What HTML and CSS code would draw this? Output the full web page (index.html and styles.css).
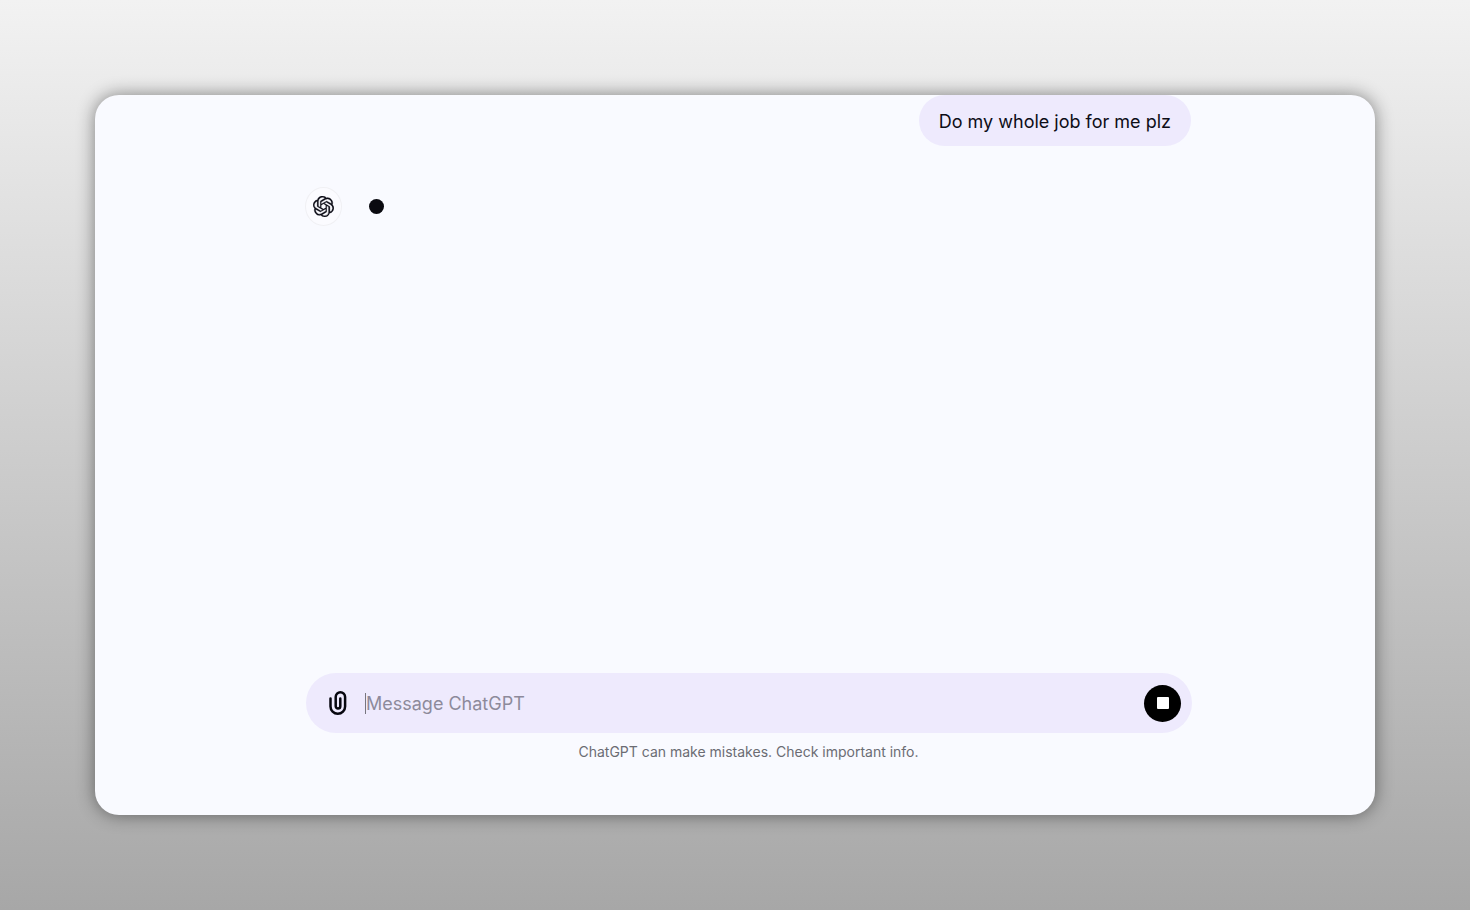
FILE: index.html
```html
<!DOCTYPE html>
<html lang="en">
<head>
<meta charset="utf-8">
<meta name="viewport" content="width=device-width, initial-scale=1">
<title>ChatGPT</title>
<link rel="stylesheet" href="styles.css">
</head>
<body>
<main class="window">
  <section class="thread">
    <p class="bubble">Do my whole job for me plz</p>
    <div class="reply">
      <span class="avatar">
        <svg class="logo" viewBox="0 0 24 24" fill="currentColor" role="img" aria-label="ChatGPT"><path d="M22.2819 9.8211a5.9847 5.9847 0 0 0-.5157-4.9108 6.0462 6.0462 0 0 0-6.5098-2.9A6.0651 6.0651 0 0 0 4.9807 4.1818a5.9847 5.9847 0 0 0-3.9977 2.9 6.0462 6.0462 0 0 0 .7427 7.0966 5.98 5.98 0 0 0 .511 4.9107 6.051 6.051 0 0 0 6.5146 2.9001A5.9847 5.9847 0 0 0 13.2599 24a6.0557 6.0557 0 0 0 5.7718-4.2058 5.9894 5.9894 0 0 0 3.9977-2.9001 6.0557 6.0557 0 0 0-.7475-7.0729zm-9.022 12.6081a4.4755 4.4755 0 0 1-2.8764-1.0408l.1419-.0804 4.7783-2.7582a.7948.7948 0 0 0 .3927-.6813v-6.7369l2.02 1.1686a.071.071 0 0 1 .038.052v5.5826a4.504 4.504 0 0 1-4.4945 4.4944zm-9.6607-4.1254a4.4708 4.4708 0 0 1-.5346-3.0137l.142.0852 4.783 2.7582a.7712.7712 0 0 0 .7806 0l5.8428-3.3685v2.3324a.0804.0804 0 0 1-.0332.0615L9.74 19.9502a4.4992 4.4992 0 0 1-6.1408-1.6464zM2.3408 7.8956a4.485 4.485 0 0 1 2.3655-1.9728V11.6a.7664.7664 0 0 0 .3879.6765l5.8144 3.3543-2.0201 1.1685a.0757.0757 0 0 1-.071 0l-4.8303-2.7865A4.504 4.504 0 0 1 2.3408 7.872zm16.5963 3.8558L13.1038 8.364 15.1192 7.2a.0757.0757 0 0 1 .071 0l4.8303 2.7913a4.4944 4.4944 0 0 1-.6765 8.1042v-5.6772a.79.79 0 0 0-.407-.667zm2.0107-3.0231l-.142-.0852-4.7735-2.7818a.7759.7759 0 0 0-.7854 0L9.409 9.2297V6.8974a.0662.0662 0 0 1 .0284-.0615l4.8303-2.7866a4.4992 4.4992 0 0 1 6.6802 4.66zM8.3065 12.863l-2.02-1.1638a.0804.0804 0 0 1-.038-.0567V6.0742a4.4992 4.4992 0 0 1 7.3757-3.4537l-.142.0805L8.704 5.459a.7948.7948 0 0 0-.3927.6813zm1.0976-2.3654l2.602-1.4998 2.6069 1.4998v2.9994l-2.5974 1.4997-2.6067-1.4997Z" stroke="currentColor" stroke-width=".3"/></svg>
      </span>
      <span class="typing"></span>
    </div>
  </section>
  <form class="composer">
    <button class="attach" type="button" aria-label="Attach files">
      <svg class="clip" viewBox="0 0 24 24" fill="none" stroke="currentColor" stroke-width="2.5" stroke-linecap="round" aria-hidden="true"><path d="M4.5 7.5v7.9a7.3 7.3 0 0 0 14.6 0V6a4.7 4.7 0 0 0-9.4 0v9.2a2.3 2.3 0 0 0 4.6 0V7.5"/></svg>
    </button>
    <span class="caret"></span>
    <input class="message" type="text" placeholder="Message ChatGPT" aria-label="Message ChatGPT">
    <button class="stop" type="button" aria-label="Stop generating"><span class="stop-mark"></span></button>
  </form>
  <p class="notice">ChatGPT can make mistakes. Check important info.</p>
</main>
</body>
</html>
```
FILE: styles.css
```css
* {
  box-sizing: border-box;
}

body {
  margin: 0;
  min-height: 100vh;
  padding: 95px;
  display: flex;
  background: linear-gradient(#f2f2f2, #a7a7a7);
  font-family: Inter, "Liberation Sans", sans-serif;
  color: #0d0d17;
}

.window {
  flex: 1;
  display: flex;
  flex-direction: column;
  padding: 0 183px 53px 210px;
  border-radius: 24px;
  background: #f9faff;
  box-shadow: 0 0 18px rgba(0, 0, 0, 0.46);
}

.thread {
  flex: 1;
  display: flex;
  flex-direction: column;
}

.bubble {
  align-self: flex-end;
  margin: 0 1px 0 0;
  padding: 14px 20px 12px;
  border-radius: 26px;
  background: #eeeafd;
  font-size: 18px;
  line-height: 25px;
}

.reply {
  display: flex;
  align-items: center;
  gap: 27px;
  margin-top: 41px;
}

.avatar {
  width: 37px;
  height: 39px;
  display: grid;
  place-items: center;
  border: 1px solid #f0f0f4;
  border-radius: 50%;
  background: #fbfbff;
}

.logo {
  width: 21px;
  height: 21px;
}

.typing {
  width: 15px;
  height: 15px;
  border-radius: 50%;
  background: #0a0a10;
}

.composer {
  display: flex;
  align-items: center;
  height: 60px;
  margin-left: 1px;
  padding: 0 11px 0 20px;
  border-radius: 30px;
  background: #eeeafd;
}

.attach,
.stop {
  display: grid;
  place-items: center;
  padding: 0;
  border: 0;
  background: none;
  color: #07070f;
}

.clip {
  width: 24px;
  height: 24px;
}

.caret {
  width: 1px;
  height: 21px;
  margin-left: 15px;
  background: #77757f;
}

.message {
  flex: 1;
  min-width: 0;
  padding: 2px 0 0;
  border: 0;
  outline: 0;
  background: none;
  font: inherit;
  font-size: 18px;
  line-height: 24px;
  color: inherit;
}

.message::placeholder {
  color: #8d8a9b;
  opacity: 1;
}

.stop {
  width: 37px;
  height: 37px;
  border-radius: 50%;
  background: #000;
}

.stop-mark {
  width: 12px;
  height: 12px;
  border-radius: 1px;
  background: #fff;
}

.notice {
  margin: 9px 0 0;
  font-size: 14px;
  line-height: 20px;
  text-align: center;
  color: #6b6c73;
}
```
